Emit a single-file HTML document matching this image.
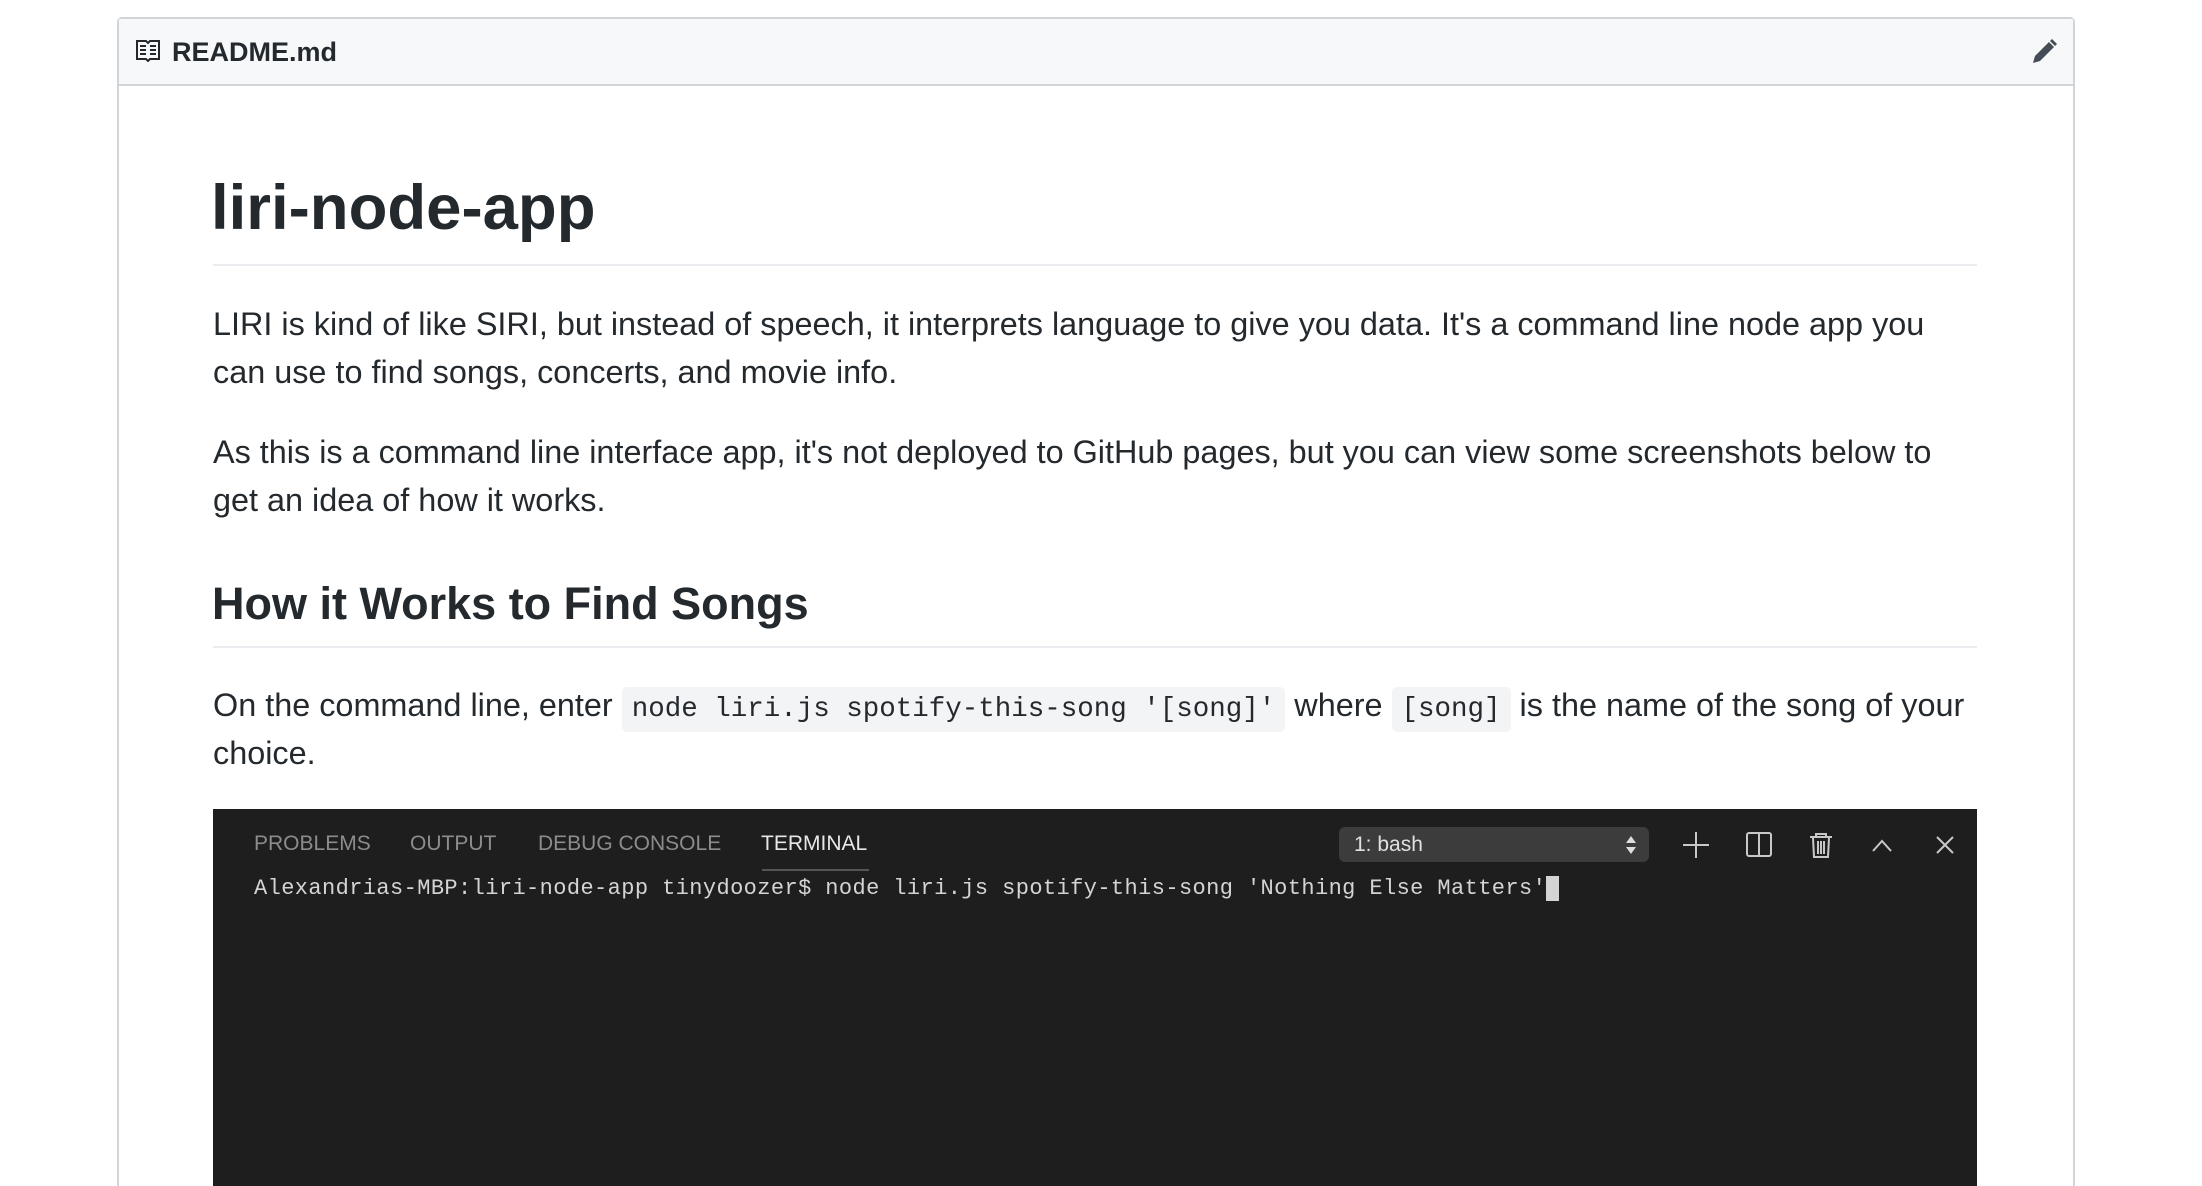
<!DOCTYPE html>
<html><head><meta charset="utf-8"><style>
*{margin:0;padding:0;box-sizing:border-box}
html,body{width:2202px;height:1186px;overflow:hidden}
body{background:#fff;position:relative;font-family:"Liberation Sans",sans-serif;color:#24292e}
.box{position:absolute;left:117px;top:17px;width:1958px;height:1169px;border:2px solid #d1d5da;border-bottom:none;border-radius:5px 5px 0 0}
.hdr{position:absolute;left:0;top:0;right:0;height:67px;background:#f6f8fa;border-bottom:2px solid #d1d5da}
.a{position:absolute;white-space:nowrap}
.p{font-size:32.4px;line-height:48px}
.rule{position:absolute;left:213px;width:1764px;height:2px;background:#eaecef}
code{font-family:"Liberation Mono",monospace;font-size:27.5px;background:#f3f4f6;border-radius:5px;padding:7px 10px}
.term{position:absolute;left:213px;top:809px;width:1764px;height:377px;background:#1e1e1e}
.tab{position:absolute;top:832px;font-size:21px;color:#8c8c8c;line-height:24px}
</style></head><body>
<div class="box"><div class="hdr"></div></div>
<svg class="a" style="left:136px;top:40px" width="24" height="22" viewBox="0 0 24 22"><path d="M1 1h9l2 2 2-2h9v18h-9l-2 2-2-2H1z" fill="none" stroke="#24292e" stroke-width="2"/><path d="M4 6h6M4 10h6M4 14h6M14 6h6M14 10h6M14 14h6" stroke="#24292e" stroke-width="2"/></svg>
<div class="a" style="left:172px;top:36px;font-size:27px;font-weight:bold;line-height:32px">README.md</div>
<svg class="a" style="left:2030px;top:38px" width="28" height="28" viewBox="0 0 28 28"><path d="M3 25l2-7L19 4l5 5L10 23z" fill="#444d56"/><path d="M20 3l2-2 5 5-2 2z" fill="#444d56"/></svg>
<div class="a" style="left:211px;top:168px;font-size:63.5px;font-weight:bold;line-height:80px">liri-node-app</div>
<div class="rule" style="top:264px"></div>
<div class="a p" style="left:213px;top:300px">LIRI is kind of like SIRI, but instead of speech, it interprets language to give you data. It's a command line node app you</div>
<div class="a p" style="left:213px;top:348px">can use to find songs, concerts, and movie info.</div>
<div class="a p" style="left:213px;top:428px">As this is a command line interface app, it's not deployed to GitHub pages, but you can view some screenshots below to</div>
<div class="a p" style="left:213px;top:476px">get an idea of how it works.</div>
<div class="a" style="left:212px;top:576px;font-size:45px;font-weight:bold;line-height:56px">How it Works to Find Songs</div>
<div class="rule" style="top:646px"></div>
<div class="a p" style="left:213px;top:681px">On the command line, enter <code>node liri.js spotify-this-song '[song]'</code> where <code>[song]</code> is the name of the song of your</div>
<div class="a p" style="left:213px;top:729px">choice.</div>
<div class="term"></div>
<div class="tab" style="left:254px">PROBLEMS</div>
<div class="tab" style="left:410px">OUTPUT</div>
<div class="tab" style="left:538px">DEBUG CONSOLE</div>
<div class="tab" style="left:761px;color:#e7e7e7">TERMINAL</div>
<div class="a" style="left:762px;top:869px;width:107px;height:2px;background:#555"></div>
<div class="a" style="left:1339px;top:827px;width:310px;height:35px;background:#3c3c3c;border-radius:6px"></div>
<div class="a" style="left:1354px;top:832px;font-size:21px;color:#e0e0e0;line-height:25px">1: bash</div>
<svg class="a" style="left:1625px;top:835px" width="12" height="20" viewBox="0 0 12 20"><path d="M6 1l5 7H1zM6 19l5-7H1z" fill="#ddd"/></svg>
<svg class="a" style="left:1680px;top:830px" width="160" height="30" viewBox="0 0 160 30" fill="none" stroke="#c8c8c8" stroke-width="2">
<path d="M16 2v26M3 15h26"/>
<rect x="67" y="3" width="24" height="23" rx="2"/><path d="M79 3v23"/>
<path d="M130 7h22M136 7V4h10v3M133 8l1 19h14l1-19M138 11v13M141 11v13M144 11v13"/>
</svg>
<svg class="a" style="left:1870px;top:834px" width="90" height="22" viewBox="0 0 90 22" fill="none" stroke="#c8c8c8" stroke-width="2"><path d="M3 17l9-10 9 10M67 3l16 16M83 3L67 19"/></svg>
<div class="a" style="left:254px;top:875px;font-family:'Liberation Mono',monospace;font-size:22px;letter-spacing:0.4px;color:#d4d4d4;line-height:28px">Alexandrias-MBP:liri-node-app tinydoozer$ node liri.js spotify-this-song 'Nothing Else Matters'</div>
<div class="a" style="left:1546px;top:876px;width:13px;height:25px;background:#d4d4d4"></div>
</body></html>
